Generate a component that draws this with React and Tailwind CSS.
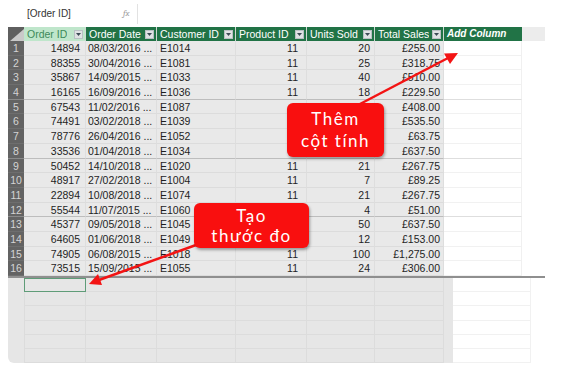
const font = { fontFamily: '"Liberation Sans", Arial, sans-serif' };

const cols = [
  { key: 'id', label: 'Order ID', w: 'w-[62px]', align: 'text-right pr-[5px]' },
  { key: 'date', label: 'Order Date', w: 'w-[71px]', align: 'text-left pl-[2px]' },
  { key: 'cust', label: 'Customer ID', w: 'w-[79px]', align: 'text-left pl-[3px]' },
  { key: 'prod', label: 'Product ID', w: 'w-[71px]', align: 'text-right pr-[8px]' },
  { key: 'units', label: 'Units Sold', w: 'w-[68px]', align: 'text-right pr-[4px]' },
  { key: 'sales', label: 'Total Sales', w: 'w-[69px]', align: 'text-right pr-[3px]' },
];

// cells covered by the callouts are left blank
const rows = [
  [14894, '08/03/2016', 'E1014', 11, 20, '£255.00'],
  [88355, '30/04/2016', 'E1081', 11, 25, '£318.75'],
  [35867, '14/09/2015', 'E1033', 11, 40, '£510.00'],
  [16165, '16/09/2016', 'E1036', 11, 18, '£229.50'],
  [67543, '11/02/2016', 'E1087', '', '', '£408.00'],
  [74491, '03/02/2018', 'E1039', '', '', '£535.50'],
  [78776, '26/04/2016', 'E1052', '', '', '£63.75'],
  [33536, '01/04/2018', 'E1034', '', '', '£637.50'],
  [50452, '14/10/2018', 'E1020', 11, 21, '£267.75'],
  [48917, '27/02/2018', 'E1004', 11, 7, '£89.25'],
  [22894, '10/08/2018', 'E1074', 11, 21, '£267.75'],
  [55544, '11/07/2015', 'E1060', '', 4, '£51.00'],
  [45377, '09/05/2018', 'E1045', '', 50, '£637.50'],
  [64605, '01/06/2018', 'E1049', '', 12, '£153.00'],
  [74905, '06/08/2015', 'E1018', 11, 100, '£1,275.00'],
  [73515, '15/09/2015', 'E1055', 11, 24, '£306.00'],
];

function DropBtn() {
  return (
    <span className="w-[9px] h-[9px] shrink-0 bg-[#dfe2e4] border border-[#b9c0c4] flex items-center justify-center">
      <svg width="5" height="3" viewBox="0 0 5 3">
        <path d="M0 0h5L2.5 3z" fill="#3c4a55" />
      </svg>
    </span>
  );
}

export default function App() {
  return (
    <div className="relative w-[570px] h-[368px] bg-white overflow-hidden text-[10.5px]" style={font}>
      {/* formula bar */}
      <div className="h-[27px] flex items-center">
        <span className="ml-[27px] w-[96px] text-[#333] text-[10px]">[Order ID]</span>
        <span className="italic text-[#a0a0a0] text-[9px] font-serif">fx</span>
        <span className="ml-[7px] w-px h-[20px] bg-[#e2e2e2]" />
      </div>

      <div className="ml-[8px] w-[537px]">
        {/* header */}
        <div className="flex h-[14px] leading-[14px]">
          <div className="w-[16px] bg-[#5f5f5f] flex items-end justify-end">
            <svg width="14" height="12" viewBox="0 0 14 12">
              <path d="M14 0V12H0z" fill="#c9c9c9" />
            </svg>
          </div>
          {cols.map((c, i) => (
            <div
              key={c.key}
              className={`${c.w} flex items-center justify-between pl-[3px] pr-[2px] border-r border-[#cfd8d2] ${
                i === 0 ? 'bg-[#bfe6cb] text-[#3d8a5a]' : 'bg-[#217346] text-white'
              }`}
            >
              <span className="truncate">{c.label}</span>
              <DropBtn />
            </div>
          ))}
          <div className="w-[78px] bg-[#217346] text-white italic font-bold pl-[3px] text-[10px]">Add Column</div>
          <div className="w-[23px] bg-[#ececec]" />
        </div>

        {/* data rows */}
        {rows.map((r, idx) => {
          const group = idx === 3 || idx === 7 || idx === 11;
          const sep = group ? 'border-[#bdbdbd]' : 'border-[#dcdcdc]';
          const vals = [r[0], `${r[1]} ...`, r[2], r[3], r[4], r[5]];
          return (
            <div key={idx} className="flex h-[14.7px] leading-[14px] text-[#1e1e1e]">
              <div className={`w-[16px] bg-[#636363] text-[#d4d4d4] text-center border-b ${group ? 'border-[#8a8a8a]' : 'border-[#6e6e6e]'}`}>
                {idx + 1}
              </div>
              {cols.map((c, i) => (
                <div key={c.key} className={`${c.w} ${c.align} bg-[#e9e9e9] border-r border-b border-r-[#dedede] ${sep} whitespace-nowrap overflow-hidden`}>
                  {vals[i]}
                </div>
              ))}
              <div className={`w-[78px] bg-white border-r border-b border-r-[#f0f0f0] ${group ? 'border-b-[#dedede]' : 'border-b-[#f1f1f1]'}`} />
            </div>
          );
        })}

        {/* bottom divider */}
        <div className="h-[2px] bg-[#8f8f8f]" />

        {/* measure grid */}
        <div className="flex">
          <div className="w-[445px] bg-[#e6e6e6] rounded-bl-[6px] overflow-hidden">
            {[0, 1, 2, 3, 4, 5].map((k) => (
              <div key={k} className="flex h-[14.2px]">
                <div className="w-[16px]" />
                {cols.map((c, i) => (
                  <div
                    key={c.key}
                    className={`${c.w} ${
                      k === 0 && i === 0 ? 'border border-[#5f9c78]' : 'border-r border-b border-[#dcdcdc]'
                    } ${i === 0 && k > 0 ? 'border-l border-l-[#dcdcdc]' : ''}`}
                  />
                ))}
              </div>
            ))}
          </div>
          <div className="w-[78px]">
            {[0, 1, 2, 3, 4, 5].map((k) => (
              <div key={k} className="h-[14.2px] border-b border-r border-[#f1f1f1]" />
            ))}
          </div>
        </div>
      </div>

      {/* arrows */}
      <svg className="absolute left-0 top-0 pointer-events-none" width="570" height="368">
        <line x1="360" y1="104" x2="448" y2="58" stroke="#f31414" strokeWidth="2.5" />
        <path d="M458 53 L444 53.5 L450 64 Z" fill="#f31414" />
        <line x1="196" y1="245" x2="99" y2="280" stroke="#f31414" strokeWidth="2.5" />
        <path d="M89 284 L98 274 L102 285 Z" fill="#f31414" />
      </svg>

      {/* callouts */}
      <div
        className="absolute left-[287px] top-[103px] w-[97px] h-[54px] rounded-[6px] bg-[#f90f0f] shadow-[1px_2px_3px_rgba(0,0,0,0.35)] flex flex-col items-center justify-center text-white text-[17px] leading-[22px] tracking-[1.5px]"
        style={{ fontFamily: 'Lato, "Open Sans", sans-serif' }}
      >
        <span>Thêm</span>
        <span>cột tính</span>
      </div>
      <div
        className="absolute left-[194px] top-[203px] w-[115px] h-[45px] rounded-[6px] bg-[#f90f0f] shadow-[1px_2px_3px_rgba(0,0,0,0.35)] flex flex-col items-center justify-center text-white text-[17px] leading-[20px] tracking-[1.5px]"
        style={{ fontFamily: 'Lato, "Open Sans", sans-serif' }}
      >
        <span>Tạo</span>
        <span>thước đo</span>
      </div>
    </div>
  );
}
